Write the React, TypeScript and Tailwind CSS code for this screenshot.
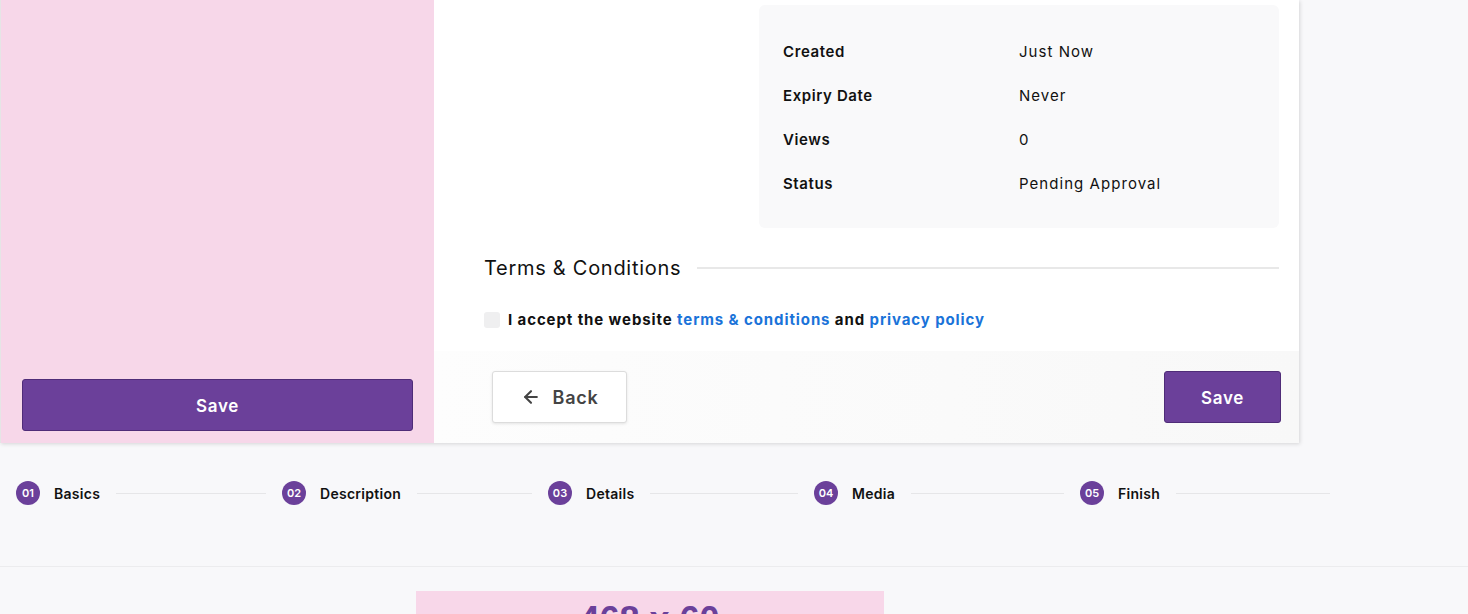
import { ArrowLeft } from "lucide-react";

const details = [
  { label: "Created", value: "Just Now" },
  { label: "Expiry Date", value: "Never" },
  { label: "Views", value: "0" },
  { label: "Status", value: "Pending Approval" },
];

const steps = ["Basics", "Description", "Details", "Media", "Finish"];

export default function App() {
  return (
    <div className="min-h-screen bg-[#f8f8fa] font-['Inter',sans-serif] text-[#111]">
      {/* card */}
      <div className="w-[1299px] h-[443px] bg-white flex shadow-[1px_1px_4px_rgba(0,0,0,0.14)]">
        <aside className="w-[434px] bg-[#f7d7e9] border-l border-[#e5e5e5] flex flex-col justify-end px-[21px] pb-3">
          <button className="h-[52px] w-full rounded-[3px] bg-[#6b409a] border border-[#4f2c78] text-white text-[17px] font-semibold tracking-[0.04em] pt-[3px]">
            Save
          </button>
        </aside>

        <main className="flex-1 flex flex-col">
          <div className="flex-1 pl-[50px] pr-5 pt-[5px]">
            <div className="flex justify-end">
              <div className="w-[520px] rounded-md bg-[#f9f9fa] px-6 pt-[25px] pb-[22px]">
                {details.map((d) => (
                  <div key={d.label} className="flex h-11 items-center text-[15px]">
                    <span className="w-[236px] font-semibold tracking-[0.04em]">{d.label}</span>
                    <span className="tracking-[0.07em]">{d.value}</span>
                  </div>
                ))}
              </div>
            </div>

            <div className="mt-[26px] flex items-center gap-4">
              <h3 className="text-[20px] leading-7 tracking-[0.036em]">Terms &amp; Conditions</h3>
              <div className="flex-1 h-[2px] bg-[#e8e8e8]" />
            </div>

            <label className="mt-[27px] flex items-center gap-2 text-[15px] font-bold tracking-[0.06em]">
              <span className="w-4 h-4 rounded-[3px] bg-[#efeff0]" />
              <span>
                I accept the website{" "}
                <a className="text-[#1a73d9]">terms &amp; conditions</a> and{" "}
                <a className="text-[#1a73d9]">privacy policy</a>
              </span>
            </label>
          </div>

          <div className="h-[92px] bg-gradient-to-r from-[#fdfdfd] to-[#f8f8f8] flex items-center justify-between pl-[58px] pr-[18px]">
            <button className="h-[52px] w-[135px] bg-white border border-[#dcdcdc] rounded-[3px] shadow-[0_1px_3px_rgba(0,0,0,0.1)] flex items-center justify-center gap-3 text-[18px] font-semibold text-[#444] tracking-[0.04em]">
              <ArrowLeft size={20} strokeWidth={2.5} />
              Back
            </button>
            <button className="h-[52px] w-[117px] rounded-[3px] bg-[#6b409a] border border-[#4f2c78] text-white text-[17px] font-semibold tracking-[0.04em] pt-[3px]">
              Save
            </button>
          </div>
        </main>
      </div>

      {/* steps */}
      <div className="ml-4 w-[1330px] grid grid-cols-5 pt-[38px] h-[123px]">
        {steps.map((s, i) => (
          <div key={s} className="flex items-start">
            <div className="flex items-center h-6 w-full">
              <span className="w-6 h-6 rounded-full bg-[#6b409a] text-white text-[11px] font-semibold flex items-center justify-center">
                0{i + 1}
              </span>
              <span className="ml-[14px] text-[14px] font-semibold tracking-[0.02em]">{s}</span>
              <span className="flex-1 ml-4 mr-4 h-px bg-[#e6e6e8]" />
            </div>
          </div>
        ))}
      </div>

      <div className="h-px bg-[#ececee]" />

      <div className="w-[1299px] pt-6 flex justify-center">
        <div className="w-[468px] h-[60px] bg-[#f8d7e9] flex justify-center pt-[11px] overflow-hidden">
          <span className="text-[36px] leading-none font-bold text-[#6b409a] font-['Liberation_Sans',sans-serif]">
            468 x 60
          </span>
        </div>
      </div>
    </div>
  );
}
